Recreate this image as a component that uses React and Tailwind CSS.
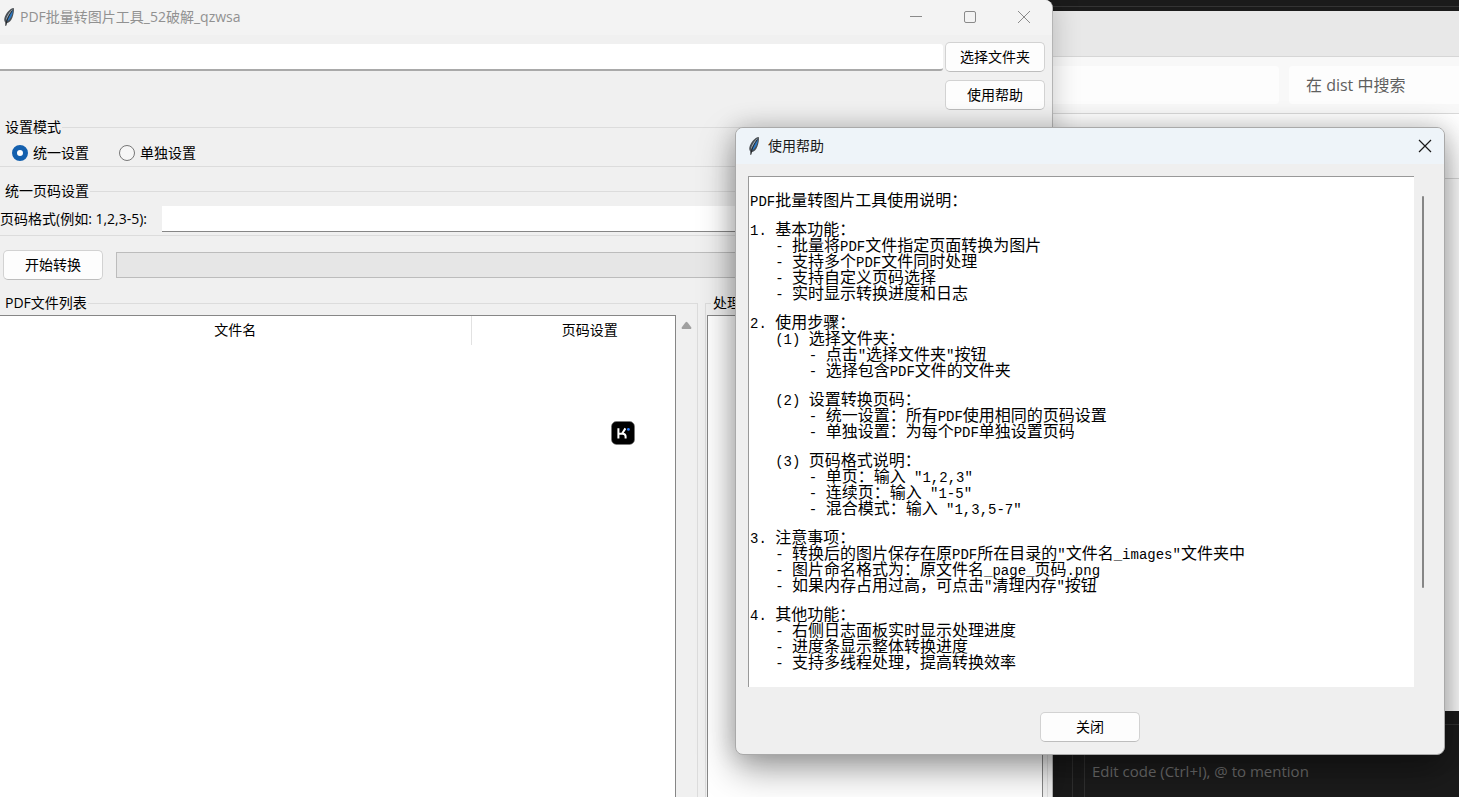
import React, { useState } from "react";

const helpSections = [
  ["PDF批量转图片工具使用说明："],
  [
    "1. 基本功能：",
    "   - 批量将PDF文件指定页面转换为图片",
    "   - 支持多个PDF文件同时处理",
    "   - 支持自定义页码选择",
    "   - 实时显示转换进度和日志",
  ],
  [
    "2. 使用步骤：",
    "   (1) 选择文件夹：",
    "       - 点击\"选择文件夹\"按钮",
    "       - 选择包含PDF文件的文件夹",
  ],
  [
    "   (2) 设置转换页码：",
    "       - 统一设置：所有PDF使用相同的页码设置",
    "       - 单独设置：为每个PDF单独设置页码",
  ],
  [
    "   (3) 页码格式说明：",
    "       - 单页：输入 \"1,2,3\"",
    "       - 连续页：输入 \"1-5\"",
    "       - 混合模式：输入 \"1,3,5-7\"",
  ],
  [
    "3. 注意事项：",
    "   - 转换后的图片保存在原PDF所在目录的\"文件名_images\"文件夹中",
    "   - 图片命名格式为：原文件名_page_页码.png",
    "   - 如果内存占用过高，可点击\"清理内存\"按钮",
  ],
  [
    "4. 其他功能：",
    "   - 右侧日志面板实时显示处理进度",
    "   - 进度条显示整体转换进度",
    "   - 支持多线程处理，提高转换效率",
  ],
];

const Feather = () => (
  <svg className="w-3 h-5 shrink-0" viewBox="0 0 12 20" aria-hidden="true">
    <path d="M10.8 1C6.8 1.4 2.6 6.4 1.4 11.2c-.4 1.8 0 3 .8 4.2l.5 3.6 1.1-2.8c2.2-.3 4.4-2.4 5.6-5.6 1-2.8 2-7.2 1.4-9.6z" fill="#4a4f54" />
    <path d="M9.8 2.2C6.8 4.2 3.8 8.4 2.8 13.4c2-3.2 4.4-7 7-11.2z" fill="#9fb0bd" />
    <path d="M10 3c-2.4 3.4-4.6 7-6.2 11.4C6.8 13 9.6 9.4 10 3z" fill="#2b78c4" />
    <path d="M9.2 3.8C6.6 7.2 4 11.4 2.8 18.8" fill="none" stroke="#16191c" strokeWidth=".8" />
  </svg>
);

const Button = ({ children, onClick }) => (
  <button
    type="button"
    onClick={onClick}
    className="w-[100px] h-[30px] shrink-0 rounded-[5px] border border-[#d2d2d2] border-b-[#bdbdbd] bg-[#fdfdfd] pb-px text-sm text-black"
  >
    {children}
  </button>
);

const Mode = ({ value, label, mode, onChange }) => (
  <label className="flex items-center gap-[5px]">
    <input
      type="radio"
      name="mode"
      checked={mode === value}
      onChange={() => onChange(value)}
      className="size-4 appearance-none rounded-full border border-[#777] bg-[#f6f6f6] checked:border-5 checked:border-[#1460ae] checked:bg-white"
    />
    {label}
  </label>
);

// latin runs are set smaller so that two of them fill about one CJK cell
const HelpLine = ({ text }) => (
  <div>
    {text.split(/([\x20-\x7e]+)/).map((part, i) =>
      i % 2 === 1 ? <span key={i} className="text-sm leading-none">{part}</span> : part
    )}
  </div>
);

const HelpDialog = ({ onClose }) => (
  <div
    role="dialog"
    aria-labelledby="help-title"
    className="absolute z-20 right-[14px] top-[127px] w-[710px] rounded-lg border border-[#a9a9a9] bg-[#efefef] overflow-hidden shadow-[0_14px_36px_rgba(0,0,0,0.38),0_0_24px_rgba(0,0,0,0.16)]"
  >
    <div className="h-9 flex items-center bg-[#eef4f9] px-3">
      <Feather />
      <h2 id="help-title" className="ml-2 flex-1 text-sm text-[#1a1a1a]">使用帮助</h2>
      <button type="button" aria-label="关闭窗口" onClick={onClose}>
        <svg className="size-[14px]" viewBox="0 0 14 14" fill="none" stroke="#1a1a1a" strokeWidth="1.2">
          <path d="M1 1l12 12M13 1L1 13" />
        </svg>
      </button>
    </div>
    <div className="flex pl-3 pr-5 pt-3">
      <div className="flex-1 h-[511px] flex flex-col gap-[13px] border-t border-l border-[#999] bg-white pt-[17px] pl-px whitespace-pre font-['Liberation_Mono','Noto_Sans_CJK_SC',monospace] text-base leading-4 text-black">
        {helpSections.map((lines, i) => (
          <div key={i}>
            {lines.map((line) => (
              <HelpLine key={line} text={line} />
            ))}
          </div>
        ))}
      </div>
      <div className="ml-2 mt-5 w-[2px] h-[392px] rounded-full bg-[#868686]" />
    </div>
    <div className="flex justify-center pt-[25px] pb-[12px]">
      <Button onClick={onClose}>关闭</Button>
    </div>
  </div>
);

const MainWindow = ({ onHelp }) => {
  const [mode, setMode] = useState("all");
  const [folder, setFolder] = useState("");
  const [pages, setPages] = useState("");

  return (
    <div className="relative z-10 flex-1 min-w-0 h-full flex flex-col rounded-tr-lg border-r border-[#b4b4b4] bg-[#f0f0f0] overflow-hidden text-sm text-black shadow-[0_0_28px_rgba(0,0,0,0.22)]">
      <div className="h-[35px] shrink-0 flex items-center bg-[#f3f3f3] pb-px pl-[3px] pr-[21px] text-[#919191]">
        <Feather />
        <h1 className="ml-[5px] flex-1">PDF批量转图片工具_52破解_qzwsa</h1>
        <div className="flex items-center gap-10">
          <button type="button" aria-label="最小化">
            <svg className="size-[14px]" viewBox="0 0 14 14" stroke="#8a8a8a"><path d="M1 6.5h12" /></svg>
          </button>
          <button type="button" aria-label="最大化">
            <svg className="size-[14px]" viewBox="0 0 14 14" fill="none" stroke="#8a8a8a"><rect x="1.5" y="1.5" width="11" height="11" rx="1.5" /></svg>
          </button>
          <button type="button" aria-label="关闭">
            <svg className="size-[14px]" viewBox="0 0 14 14" fill="none" stroke="#8a8a8a"><path d="M1 1l12 12M13 1L1 13" /></svg>
          </button>
        </div>
      </div>

      <div className="mt-[7px] pr-[7px] flex items-center gap-[2px]">
        <input
          aria-label="文件夹路径"
          value={folder}
          onChange={(e) => setFolder(e.target.value)}
          className="flex-1 h-[27px] rounded-r-[3px] border-b-2 border-[#a9a9a9] bg-white px-2 outline-none"
        />
        <Button>选择文件夹</Button>
      </div>
      <div className="mt-2 pr-[7px] flex justify-end">
        <Button onClick={onHelp}>使用帮助</Button>
      </div>

      <fieldset className="mt-[7px] mr-1 shrink-0 border-y border-[#dcdcdc]">
        <legend className="pl-[5px] pr-[1px] leading-5">设置模式</legend>
        <div className="flex gap-[30px] pl-3 pt-[6px] pb-[3px] leading-5">
          <Mode value="all" label="统一设置" mode={mode} onChange={setMode} />
          <Mode value="single" label="单独设置" mode={mode} onChange={setMode} />
        </div>
      </fieldset>

      <fieldset className="mt-[14px] mr-1 shrink-0 border-y border-[#dcdcdc]">
        <legend className="pl-[5px] pr-[1px] leading-5">统一页码设置</legend>
        <div className="flex items-center pt-[5px] pb-[3px] pr-2">
          <label htmlFor="pages" className="w-[162px]">页码格式(例如: 1,2,3-5):</label>
          <input
            id="pages"
            value={pages}
            onChange={(e) => setPages(e.target.value)}
            className="flex-1 h-[26px] border-b border-[#868686] bg-white px-2 outline-none"
          />
        </div>
      </fieldset>

      <div className="mt-[14px] pl-[3px] pr-2 flex items-center gap-[13px]">
        <Button>开始转换</Button>
        <div role="progressbar" aria-label="转换进度" className="flex-1 h-[26px] border border-[#bcbcbc] bg-[#e6e6e6]" />
      </div>

      <div className="mt-[13px] mr-1 flex-1 min-h-0 flex gap-[7px]">
        <fieldset className="w-[698px] shrink-0 flex flex-col border-t border-r border-[#dcdcdc]">
          <legend className="pl-[5px] pr-[1px] leading-5">PDF文件列表</legend>
          <div className="mt-[2px] flex-1 flex">
            <div className="w-[676px] border-t border-r border-[#868686] bg-white overflow-hidden">
              <table className="w-[708px] table-fixed">
                <thead>
                  <tr className="h-[29px]">
                    <th className="w-[471px] border-r border-[#e2e2e2] pb-[2px] font-normal">文件名</th>
                    <th className="pb-[2px] font-normal">页码设置</th>
                  </tr>
                </thead>
              </table>
            </div>
            <svg className="ml-[5px] mt-[6px] w-[11px] h-[9px]" viewBox="0 0 11 9" aria-hidden="true">
              <path d="M4.6 1.2a1.2 1.2 0 0 1 1.8 0l3.8 5c.5.8 0 1.8-.9 1.8H1.7c-.9 0-1.4-1-.9-1.8z" fill="#a0a0a0" />
            </svg>
          </div>
        </fieldset>
        <fieldset className="flex-1 min-w-0 flex flex-col border-t border-x border-[#dcdcdc]">
          <legend className="ml-[5px] px-[2px] leading-5">处理日志</legend>
          <div className="mt-[2px] ml-[1px] mr-1 flex-1 border-t border-x border-[#868686] bg-white" />
        </fieldset>
      </div>
    </div>
  );
};

const Background = () => (
  <div className="w-[406px] h-full shrink-0 flex flex-col bg-[#1b1b1b]">
    <div className="h-[11px] shrink-0 pt-[6px]">
      <div className="h-px bg-[#343434]" />
    </div>
    <div className="h-[700px] shrink-0 flex flex-col bg-white">
      <div className="h-[46px] bg-[#e8e8e8] border-b border-[#d6d6d6]" />
      <div className="h-[57px] flex items-center gap-[10px] border-b border-[#d9d9d9] bg-[#f8f8f8]">
        <div className="w-[226px] h-[38px] rounded-r-[4px] bg-[#fdfdfd]" />
        <input
          aria-label="搜索"
          placeholder="在 dist 中搜索"
          className="flex-1 min-w-0 h-[38px] rounded-l-[4px] bg-[#fdfdfd] pl-[17px] text-base text-[#5f5f5f] placeholder:text-[#5f5f5f] outline-none"
        />
      </div>
      <div className="h-[65px] border-b border-[#d9d9d9]" />
    </div>
    <div className="flex-1 flex">
      <div className="w-5 border-r border-[#303030]" />
      <div className="w-3 border-r border-[#303030]" />
      <div className="flex-1 pt-[13px]">
        <div className="border-t border-[#333] pt-9 pl-[7px]">
          <p className="text-[15px] leading-5 text-[#6b6b6b]">Edit code (Ctrl+I), @ to mention</p>
        </div>
      </div>
    </div>
  </div>
);

const App = () => {
  const [helpOpen, setHelpOpen] = useState(true);

  return (
    <div className="relative h-screen flex overflow-hidden bg-[#1b1b1b] font-['Open_Sans','Noto_Sans_CJK_SC',sans-serif]">
      <MainWindow onHelp={() => setHelpOpen(true)} />
      <Background />
      {/* floating assistant badge */}
      <button type="button" aria-label="Kimi" className="absolute z-10 left-[611px] top-[421px]">
        <svg className="size-6" viewBox="0 0 24 24">
          <rect x=".5" y=".5" width="23" height="23" rx="5" fill="#000" stroke="#777" strokeWidth=".6" />
          <path d="M7.4 7.2v10.4M8 12.8h3.6q3 0 3 2.8v2M11 12.8L14.4 7.4" fill="none" stroke="#fff" strokeWidth="2" />
          <circle cx="17.4" cy="8.4" r="1.4" fill="#2a7bff" />
        </svg>
      </button>
      {helpOpen && <HelpDialog onClose={() => setHelpOpen(false)} />}
    </div>
  );
};

export default App;
